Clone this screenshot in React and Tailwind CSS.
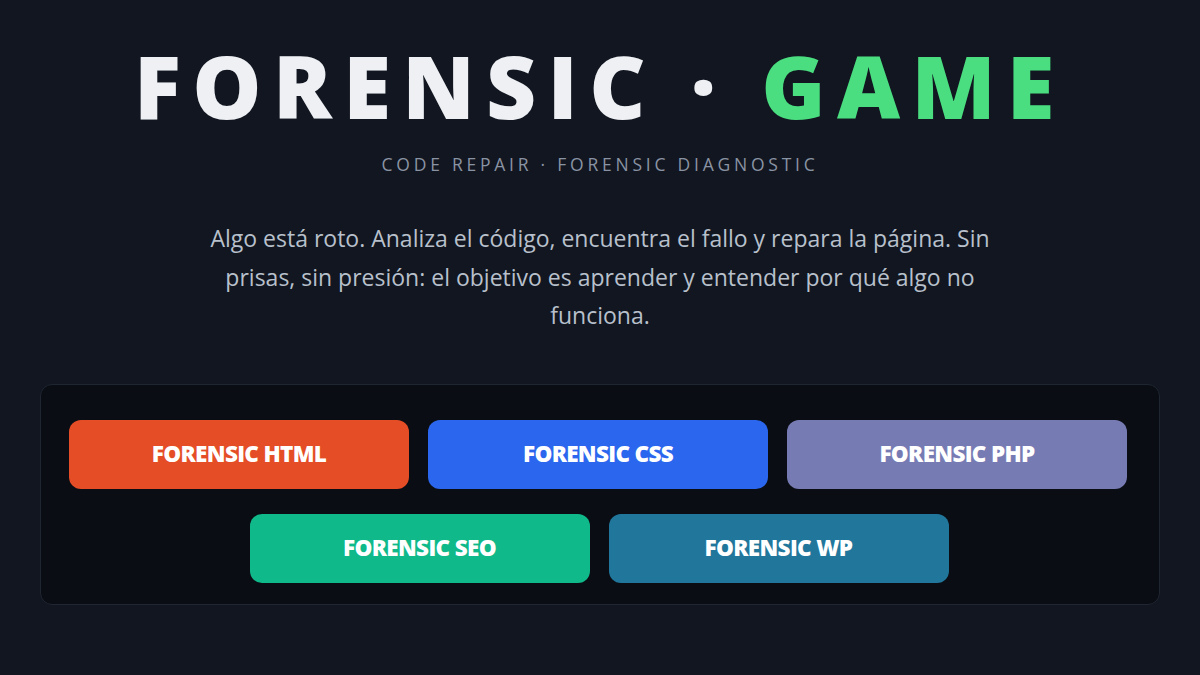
export default function App() {
  const row1 = [
    { label: "FORENSIC HTML", bg: "bg-[#e44d26]" },
    { label: "FORENSIC CSS", bg: "bg-[#2b67ee]" },
    { label: "FORENSIC PHP", bg: "bg-[#777bb4]" },
  ];
  const row2 = [
    { label: "FORENSIC SEO", bg: "bg-[#10b98a]" },
    { label: "FORENSIC WP", bg: "bg-[#21769c]" },
  ];

  const Btn = ({ label, bg }) => (
    <button
      type="button"
      className={`w-[340px] h-[69px] rounded-[12px] ${bg} text-white text-[22.5px] font-extrabold tracking-[-0.03em] flex items-center justify-center`}
    >
      {label}
    </button>
  );

  return (
    <div
      className="w-[1200px] h-[675px] bg-[#111620] flex flex-col items-center overflow-hidden"
      style={{ fontFamily: '"Open Sans", "Noto Sans", sans-serif' }}
    >
      <h1 className="mt-[42px] text-[87px] leading-none font-extrabold tracking-[0.13em] text-[#eef0f4] whitespace-nowrap">
        FORENSIC · <span className="text-[#4ade80]">GAME</span>
      </h1>
      <p className="mt-[22px] text-[17.5px] tracking-[0.215em] text-[#8a93a3]">
        CODE REPAIR · FORENSIC DIAGNOSTIC
      </p>
      <p className="mt-[42px] w-[800px] text-center text-[23px] leading-[38.5px] text-[#b8c0cc]">
        Algo está roto. Analiza el código, encuentra el fallo y repara la página. Sin prisas, sin presión: el objetivo es aprender y entender por qué algo no funciona.
      </p>
      <div className="mt-[49px] w-[1120px] rounded-[12px] border border-[#1f2631] bg-[#0a0d13] pt-[35px] pb-[21px] flex flex-col items-center gap-[25px]">
        <div className="flex gap-[19px] -translate-x-[2px]">
          {row1.map((b) => (
            <Btn key={b.label} {...b} />
          ))}
        </div>
        <div className="flex gap-[19px] -translate-x-[1px]">
          {row2.map((b) => (
            <Btn key={b.label} {...b} />
          ))}
        </div>
      </div>
    </div>
  );
}
